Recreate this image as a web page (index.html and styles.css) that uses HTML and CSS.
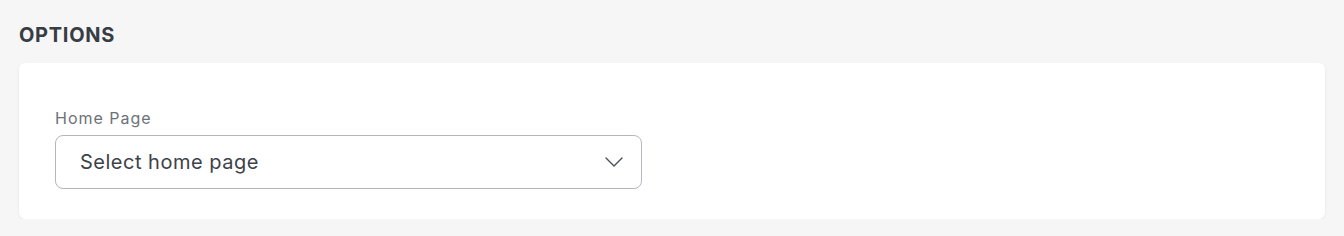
FILE: index.html
```html
<!DOCTYPE html>
<html lang="en">
<head>
    <meta charset="UTF-8">
    <title>Options</title>
    <link rel="stylesheet" href="styles.css">
</head>
<body>
    <h2 class="section-title">OPTIONS</h2>
    <div class="card">
        <div class="form-group">
            <label for="home-page">Home Page</label>
            <div class="select-wrap">
                <select id="home-page">
                    <option>Select home page</option>
                </select>
                <svg class="chevron" width="18" height="10" viewBox="0 0 18 10" fill="none">
                    <path d="M1 1l8 8 8-8" stroke="#4b5058" stroke-width="1.4" stroke-linecap="round" stroke-linejoin="round"/>
                </svg>
            </div>
        </div>
    </div>
</body>
</html>
```

FILE: styles.css
```css
body {
    margin: 0;
    padding: 0 19px;
    background: #f6f6f6;
    font-family: Inter, "Noto Sans", sans-serif;
}
.section-title {
    margin: 0;
    padding-top: 23px;
    font-size: 20px;
    font-weight: 700;
    letter-spacing: 0.7px;
    color: #373c45;
    line-height: 24px;
}
.card {
    margin-top: 16px;
    background: #fff;
    border-radius: 6px;
    box-shadow: 0 1px 3px rgba(0, 0, 0, 0.08);
    padding: 46px 36px 30px;
}
.form-group {
    display: flex;
    flex-direction: column;
    gap: 8px;
}
label {
    font-size: 16px;
    line-height: 18px;
    letter-spacing: 1px;
    color: #6d7178;
}
.select-wrap {
    position: relative;
    width: 587px;
}
select {
    appearance: none;
    width: 100%;
    height: 54px;
    padding: 0 24px;
    border: 1px solid #b3b7bd;
    border-radius: 8px;
    background: #fff;
    font-family: inherit;
    font-size: 20px;
    letter-spacing: 0.5px;
    color: #3d4149;
}
.chevron {
    position: absolute;
    right: 19px;
    top: 22px;
    pointer-events: none;
}
```
